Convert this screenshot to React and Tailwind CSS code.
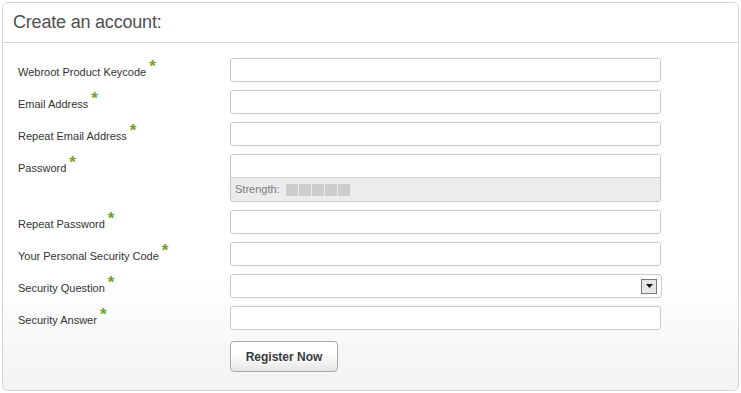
const fields = [
  { label: 'Webroot Product Keycode', type: 'text' },
  { label: 'Email Address', type: 'text' },
  { label: 'Repeat Email Address', type: 'text' },
  { label: 'Password', type: 'password' },
  { label: 'Repeat Password', type: 'text' },
  { label: 'Your Personal Security Code', type: 'text' },
  { label: 'Security Question', type: 'select' },
  { label: 'Security Answer', type: 'text' },
];

const Label = ({ text }) => (
  <div className="w-[212px] shrink-0 pt-[4px] text-[11px] leading-[13px] text-[#333]">
    {text}
    <span className="relative -top-[4px] ml-[3px] text-[17px] font-bold leading-none text-[#6aa31c]">*</span>
  </div>
);

const Field = ({ type }) => {
  if (type === 'password') {
    return (
      <div className="w-[431px] rounded-[3px] border border-[#c9c9c9] bg-[#ececec]">
        <div className="h-[23px] rounded-t-[3px] border-b border-[#d4d4d4] bg-white" />
        <div className="flex h-[23px] items-center pl-[4px] text-[11px] text-[#7a7a7a]">
          <span>Strength:</span>
          <div className="ml-[6px] flex gap-[1px]">
            <div className="h-[12px] w-[12px] bg-[#cccccc]" />
            <div className="h-[12px] w-[12px] bg-[#cccccc]" />
            <div className="h-[12px] w-[12px] bg-[#cccccc]" />
            <div className="h-[12px] w-[12px] bg-[#cccccc]" />
            <div className="h-[12px] w-[12px] bg-[#cccccc]" />
          </div>
        </div>
      </div>
    );
  }
  if (type === 'select') {
    return (
      <div className="flex h-[24px] w-[432px] items-center justify-end rounded-[3px] border border-[#c9c9c9] bg-white pr-[4px]">
        <div className="flex h-[15px] w-[16px] items-center justify-center border border-[#7a7a7a] bg-[#e6e6e6]">
          <svg width="7" height="4" viewBox="0 0 7 4">
            <path d="M0 0h7L3.5 4z" fill="#111" />
          </svg>
        </div>
      </div>
    );
  }
  return <div className="h-[24px] w-[431px] rounded-[3px] border border-[#c9c9c9] bg-white" />;
};

export default function App() {
  return (
    <div className="h-[393px] w-[741px] bg-white p-[2px] font-['Liberation_Sans',Arial,sans-serif]">
      <div className="flex h-[389px] flex-col overflow-hidden rounded-[6px] border border-[#d6d6d6] bg-gradient-to-b from-white from-70% to-[#f3f3f3]">
        <div className="flex h-[40px] shrink-0 items-center border-b border-[#d9d9d9] bg-white pl-[10px]">
          <h1 className="text-[18px] tracking-[-0.2px] text-[#505050]">Create an account:</h1>
        </div>
        <div className="flex flex-col gap-[8px] pl-[15px] pt-[15px]">
          {fields.map((f) => (
            <div key={f.label} className="flex items-start">
              <Label text={f.label} />
              <Field type={f.type} />
            </div>
          ))}
          <div className="pl-[212px] pt-[3px]">
            <button className="h-[31px] w-[108px] rounded-[4px] border border-[#a9a9a9] bg-gradient-to-b from-white from-40% to-[#e6e6e6] text-[12px] font-bold text-[#3a3a3a] [text-shadow:0_1px_0_#fff]">
              Register Now
            </button>
          </div>
        </div>
      </div>
    </div>
  );
}
